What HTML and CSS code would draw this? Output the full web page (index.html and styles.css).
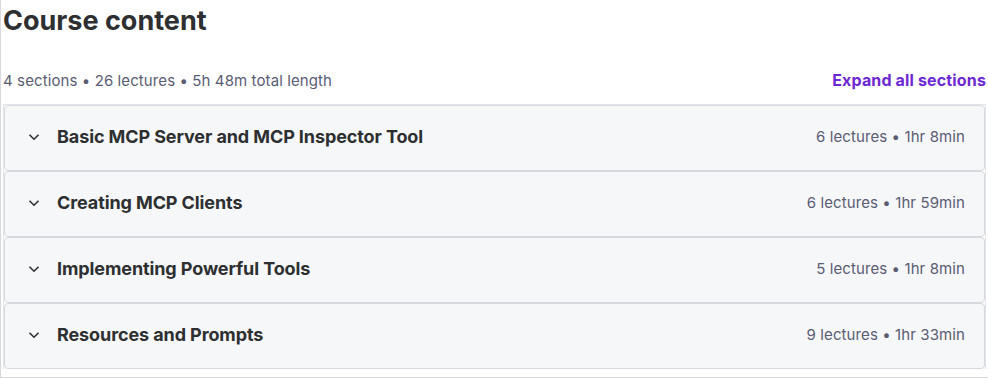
FILE: index.html
```html
<!DOCTYPE html>
<html>
<head>
<meta charset="utf-8">
<link rel="stylesheet" href="styles.css">
</head>
<body>
<div class="page">
  <h2 class="title">Course content</h2>
  <div class="meta-row">
    <span class="stats">4 sections • 26 lectures • 5h 48m total length</span>
    <button class="expand">Expand all sections</button>
  </div>
  <div class="sections">
    <div class="section">
      <div class="left"><svg class="chev" viewBox="0 0 12 8"><path d="M1.5 1.8 L6 6.2 L10.5 1.8" /></svg><span class="name">Basic MCP Server and MCP Inspector Tool</span></div>
      <span class="info">6 lectures • 1hr 8min</span>
    </div>
    <div class="section">
      <div class="left"><svg class="chev" viewBox="0 0 12 8"><path d="M1.5 1.8 L6 6.2 L10.5 1.8" /></svg><span class="name">Creating MCP Clients</span></div>
      <span class="info">6 lectures • 1hr 59min</span>
    </div>
    <div class="section">
      <div class="left"><svg class="chev" viewBox="0 0 12 8"><path d="M1.5 1.8 L6 6.2 L10.5 1.8" /></svg><span class="name">Implementing Powerful Tools</span></div>
      <span class="info">5 lectures • 1hr 8min</span>
    </div>
    <div class="section">
      <div class="left"><svg class="chev" viewBox="0 0 12 8"><path d="M1.5 1.8 L6 6.2 L10.5 1.8" /></svg><span class="name">Resources and Prompts</span></div>
      <span class="info">9 lectures • 1hr 33min</span>
    </div>
  </div>
</div>
</body>
</html>
```

FILE: styles.css
```css
* { box-sizing: border-box; }
html, body { margin: 0; padding: 0; background: #fff; }
body { font-family: Inter, "Noto Sans", sans-serif; color: #2d2f31; }
.page {
  width: 988px;
  height: 378px;
  border-left: 1px solid #d8d9de;
  border-bottom: 1px solid #d8d9de;
  padding: 0 2px 0 1px;
}
.title {
  margin: 0;
  padding-top: 5px;
  font-size: 27px;
  line-height: 32px;
  font-weight: 700;
  color: #2d2f31;
  padding-left: 1px;
}
.meta-row {
  display: flex;
  justify-content: space-between;
  align-items: center;
  margin-top: 32px;
  height: 22px;
  padding-left: 1px;
}
.stats { font-size: 15px; color: #595c73; letter-spacing: 0.1px; }
.expand {
  border: 0; background: none; padding: 0;
  font-family: inherit;
  font-size: 16px; font-weight: 700; color: #6d28d2;
  letter-spacing: 0.15px;
}
.sections {
  margin-top: 13px;
  border: 1px solid #e4e5ea;
  border-bottom: 0;
  margin-left: 1px;
}
.section {
  height: 66px;
  display: flex;
  align-items: center;
  justify-content: space-between;
  background: #f6f7f9;
  border: 1px solid #d8d9e0;
  border-radius: 4px;
  padding: 0 19px 3px 23px;
}
.left { display: flex; align-items: center; }
.chev { width: 12px; height: 8px; margin-right: 17px; fill: none; stroke: #2d2f31; stroke-width: 1.6; }
.name { font-size: 18px; font-weight: 700; color: #2d2f31; letter-spacing: -0.1px; }
.info { font-size: 15px; color: #595c73; letter-spacing: 0.1px; }
```
